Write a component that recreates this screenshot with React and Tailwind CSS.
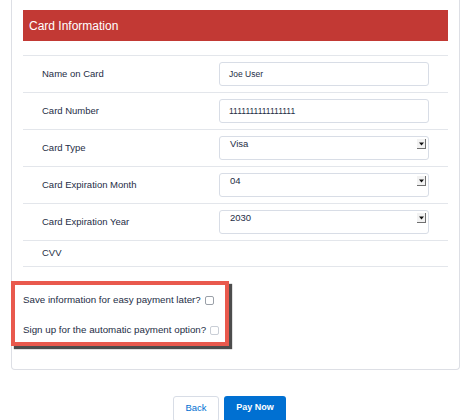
import React from "react";

function Arrow() {
  return (
    <div className="absolute right-[2px] top-[2px] w-[9px] h-[10px] bg-[#f2f2f2] border-r border-b border-[#707070] flex items-center justify-center">
      <svg width="5" height="4" viewBox="0 0 5 4">
        <polygon points="0,0.5 5,0.5 2.5,3.5" fill="#111" />
      </svg>
    </div>
  );
}

function Row({ label, children, h = "h-[37px]" }) {
  return (
    <div className={`${h} border-t border-[#e3e6eb] flex items-center`}>
      <div className="w-[196px] pl-[19px] text-[9.5px] text-[#1e2d45]">{label}</div>
      {children}
    </div>
  );
}

function Input({ value }) {
  return (
    <div className="w-[210px] h-[24px] border border-[#d8dde6] rounded-[3px] bg-white flex items-center pl-[9px] text-[8.5px] text-[#1e2d45]">
      {value}
    </div>
  );
}

function Select({ value }) {
  return (
    <div className="relative w-[210px] h-[24px] border border-[#d8dde6] rounded-[3px] bg-white pl-[10px] pt-[1px] text-[9.5px] leading-[12px] text-[#1e2d45]">
      {value}
      <Arrow />
    </div>
  );
}

export default function App() {
  return (
    <div className="w-[467px] h-[420px] bg-white overflow-hidden font-['Liberation_Sans',Arial,sans-serif]">
      <div className="ml-[11px] w-[449px] border-x border-b border-[#dddfe5] rounded-b-[4px] px-[11px] pt-[10px] pb-[23px]">
        <div className="h-[31px] bg-[#c23934] text-white text-[12px] pl-[6px] flex items-center">
          Card Information
        </div>
        <div className="mt-[14px] border-b border-[#e3e6eb]">
          <Row label="Name on Card"><Input value="Joe User" /></Row>
          <Row label="Card Number"><Input value="1111111111111111" /></Row>
          <Row label="Card Type"><Select value="Visa" /></Row>
          <Row label="Card Expiration Month"><Select value="04" /></Row>
          <Row label="Card Expiration Year"><Select value="2030" /></Row>
          <Row label="CVV" h="h-[26px]" />
        </div>
        <div className="mt-[14px] ml-[-12px] w-[218px] h-[65px] border-[4px] border-[#e9594d] bg-white shadow-[3px_3px_1px_#4d4d4d] pl-[8px] pt-[8px] flex flex-col gap-[16px] text-[9.75px] text-[#1e2d45]">
          <div className="h-[14px] flex items-center">
            <span>Save information for easy payment later?</span>
            <span className="ml-[4px] w-[9px] h-[9px] border border-[#9aa0a8] rounded-[2px] bg-white" />
          </div>
          <div className="h-[14px] flex items-center">
            <span>Sign up for the automatic payment option?</span>
            <span className="ml-[4px] w-[9px] h-[9px] border border-[#c9ced6] rounded-[2px] bg-white" />
          </div>
        </div>
      </div>
      <div className="mt-[26px] ml-[173px] flex gap-[5px]">
        <div className="w-[46px] h-[26px] border border-[#d8dde6] rounded-[3px] bg-white text-[#0070d2] text-[9.5px] flex items-center justify-center pb-[2px]">
          Back
        </div>
        <div className="w-[62px] h-[26px] rounded-[3px] bg-[#0070d2] text-white text-[9px] font-bold flex items-center justify-center pb-[2px]">
          Pay Now
        </div>
      </div>
    </div>
  );
}
